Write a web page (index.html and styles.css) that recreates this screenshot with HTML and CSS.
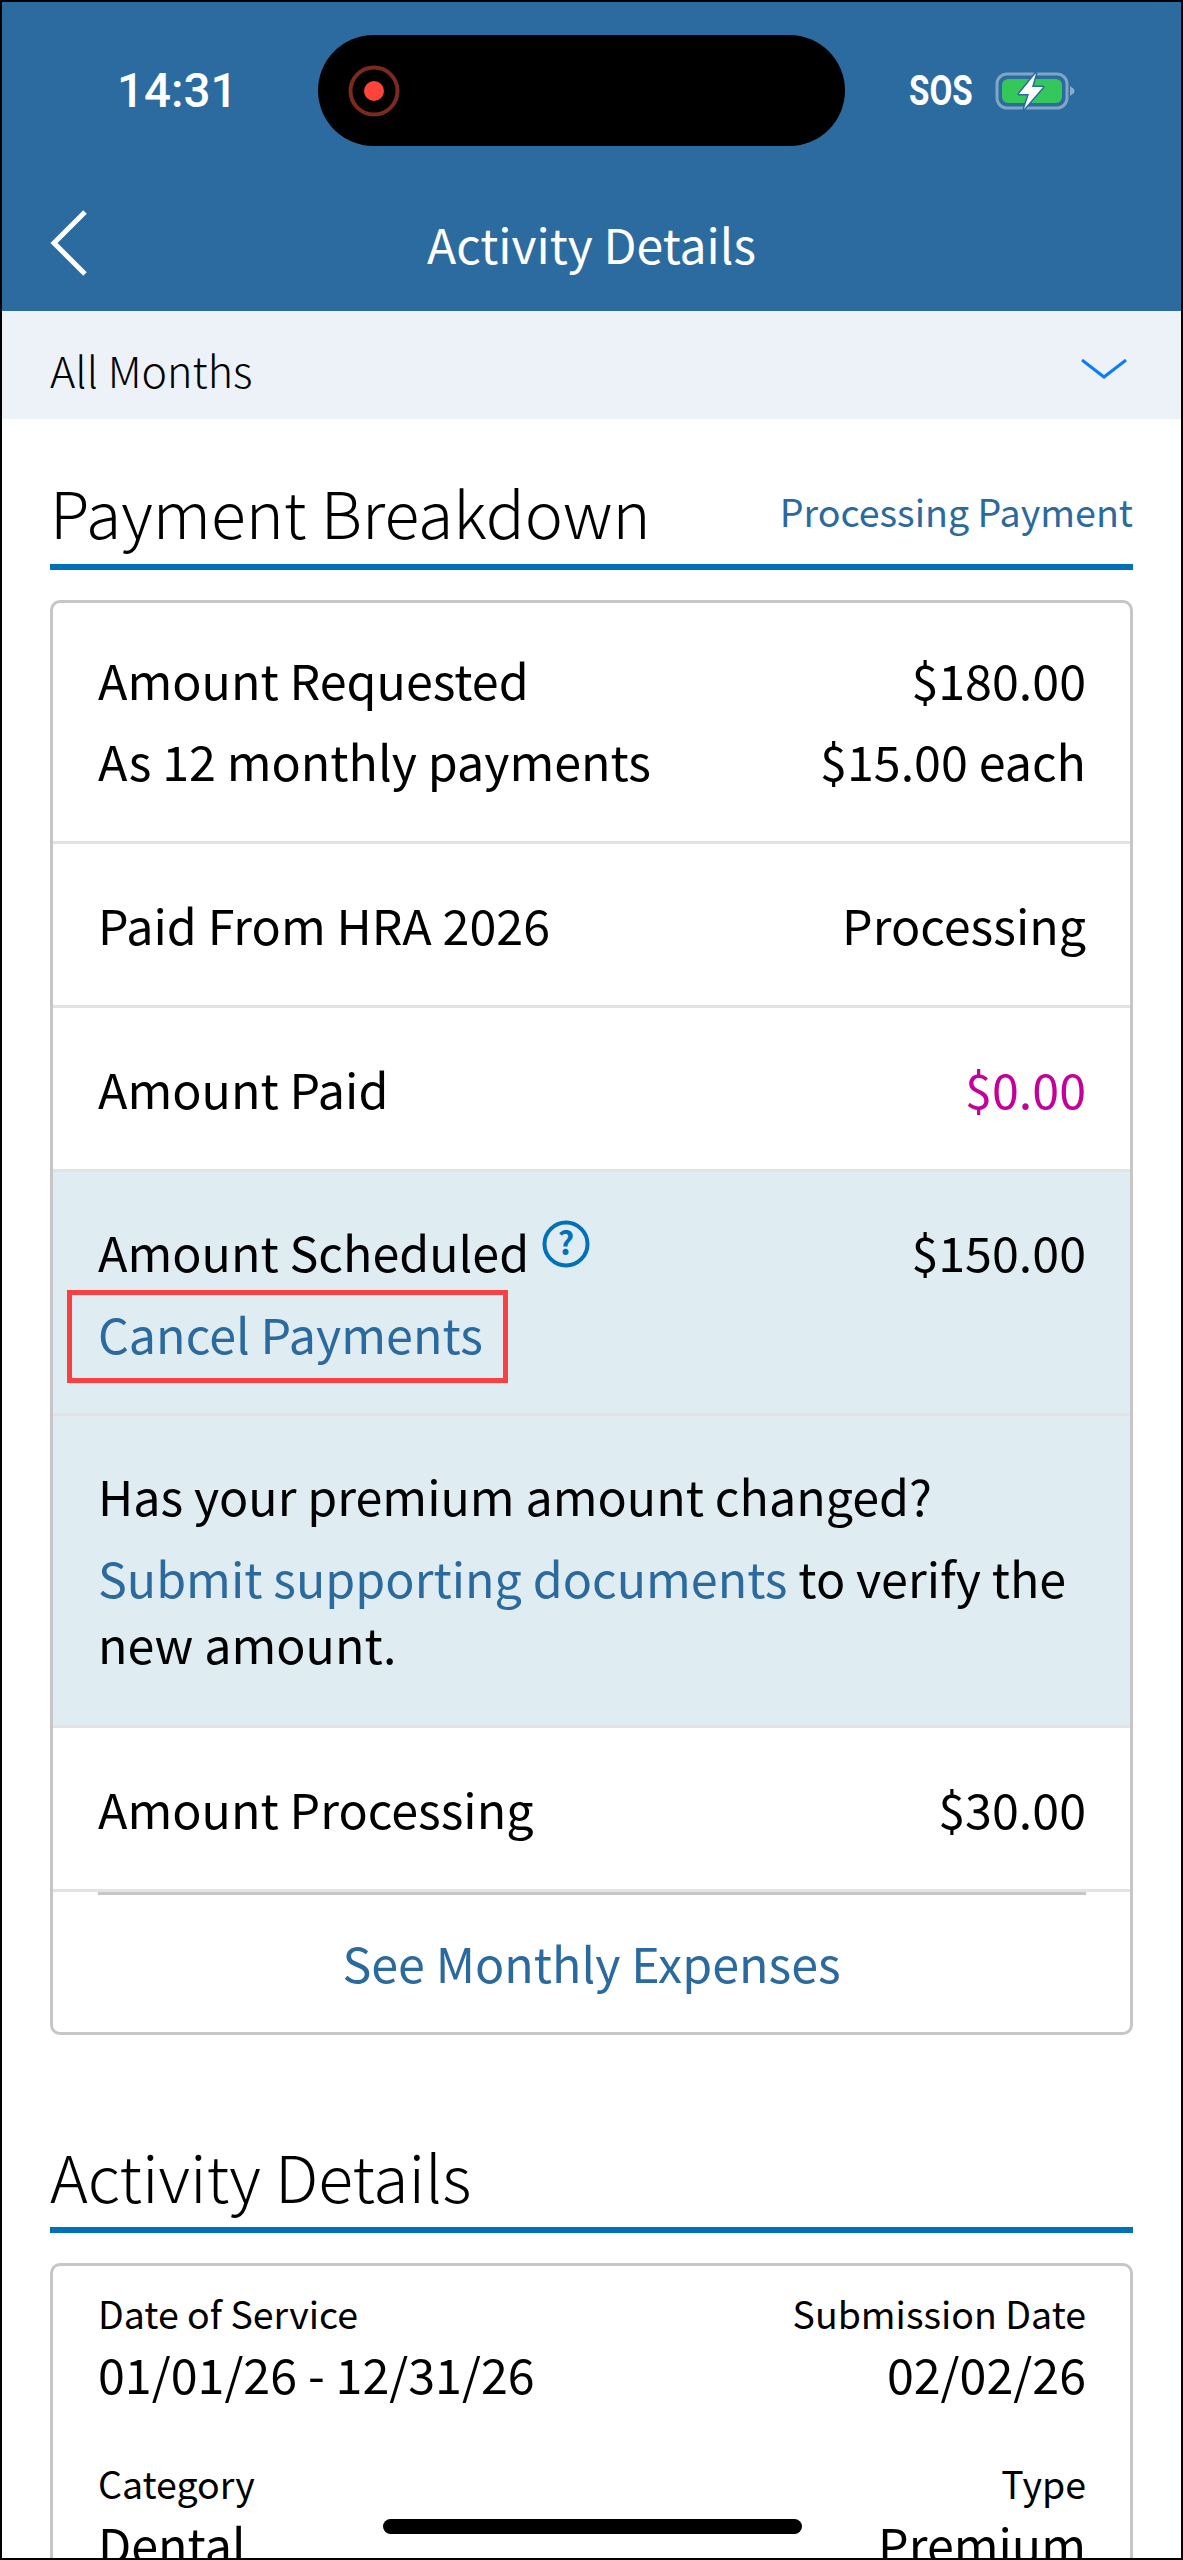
FILE: index.html
```html
<!DOCTYPE html>
<html lang="en">
<head>
  <meta charset="UTF-8">
  <title>Activity Details</title>
  <link rel="stylesheet" href="styles.css">
</head>
<body>
  <div class="phone">

    <!-- Header -->
    <header class="top-bar">
      <div class="status-bar">
        <span class="clock">14:31</span>
        <div class="island">
          <svg class="rec-icon" width="52" height="52" viewBox="0 0 52 52">
            <circle cx="26" cy="26" r="23.5" fill="none" stroke="#7b2a1f" stroke-width="4"/>
            <circle cx="26" cy="26" r="10" fill="#ff453a"/>
          </svg>
        </div>
        <div class="status-right">
          <span class="sos">SOS</span>
          <svg class="battery" width="80" height="40" viewBox="0 0 80 40">
            <rect x="2" y="3" width="70" height="34" rx="10" fill="none" stroke="#fff" stroke-opacity="0.4" stroke-width="3"/>
            <rect x="7" y="8" width="60" height="24" rx="6" fill="#34c759"/>
            <path d="M75 15 L79 18 Q80 20 79 22 L75 25 Z" fill="#fff" fill-opacity="0.45"/>
            <path d="M41 2 L24 23 L34 23 L29 38 L48 16 L37 16 Z" fill="#fff" stroke="#2c6ba0" stroke-width="3" stroke-linejoin="round" paint-order="stroke"/>
          </svg>
        </div>
      </div>
      <div class="nav-bar">
        <svg class="back-icon" width="40" height="68" viewBox="0 0 40 68">
          <path d="M36 3 L5 34 L36 65" fill="none" stroke="#fff" stroke-width="5"/>
        </svg>
        <h1>Activity Details</h1>
      </div>
    </header>

    <!-- Month filter -->
    <div class="month-filter">
      <span>All Months</span>
      <svg width="46" height="20" viewBox="0 0 46 20">
        <path d="M1 1 L23 18 L45 1" fill="none" stroke="#0a7aff" stroke-width="3"/>
      </svg>
    </div>

    <main class="content">
      <!-- Payment Breakdown -->
      <div class="section-head">
        <h2>Payment Breakdown</h2>
        <span class="status-label">Processing Payment</span>
      </div>

      <div class="card">
        <div class="row requested">
          <div class="line"><span>Amount Requested</span><span>$180.00</span></div>
          <div class="line"><span>As 12 monthly payments</span><span>$15.00 each</span></div>
        </div>
        <div class="row">
          <div class="line"><span>Paid From HRA 2026</span><span>Processing</span></div>
        </div>
        <div class="row">
          <div class="line"><span>Amount Paid</span><span class="paid">$0.00</span></div>
        </div>
        <div class="row tinted scheduled">
          <div class="line">
            <span>Amount Scheduled<span class="help"><svg width="48" height="48" viewBox="0 0 48 48"><circle cx="24" cy="24" r="21.5" fill="none" stroke="#0071b8" stroke-width="4"/><text x="24" y="35" text-anchor="middle" class="help-mark">?</text></svg></span></span>
            <span>$150.00</span>
          </div>
          <div class="line"><a class="link cancel">Cancel Payments</a></div>
        </div>
        <div class="row tinted premium">
          <p>Has your premium amount changed?</p>
          <p class="tight"><a class="link">Submit supporting documents</a> to verify the new amount.</p>
        </div>
        <div class="row">
          <div class="line"><span>Amount Processing</span><span>$30.00</span></div>
        </div>
        <div class="see-more"><a class="link">See Monthly Expenses</a></div>
      </div>

      <!-- Activity Details -->
      <div class="section-head second">
        <h2>Activity Details</h2>
      </div>

      <div class="card details">
        <div class="detail-row">
          <div><div class="label">Date of Service</div><div class="value">01/01/26 - 12/31/26</div></div>
          <div class="right"><div class="label">Submission Date</div><div class="value">02/02/26</div></div>
        </div>
        <div class="detail-row">
          <div><div class="label">Category</div><div class="value">Dental</div></div>
          <div class="right"><div class="label">Type</div><div class="value">Premium</div></div>
        </div>
      </div>
    </main>

    <div class="home-bar"></div>
  </div>
</body>
</html>
```

FILE: styles.css
```css
* {
  box-sizing: border-box;
}

body {
  margin: 0;
  font-family: "Noto Sans CJK SC", "Noto Sans", sans-serif;
  color: #000;
  background: #000;
}

.phone {
  position: relative;
  height: 2560px;
  overflow: hidden;
  border: 2px solid #000;
  background: #fff;
}

/* Header */
.top-bar {
  height: 309px;
  padding-top: 33px;
  background-color: #2c6ba0;
  color: #fff;
}

.status-bar {
  display: flex;
  align-items: center;
  height: 111px;
  padding-left: 115px;
}

.clock {
  width: 201px;
  font-family: Roboto, sans-serif;
  font-weight: 500;
  font-size: 47.5px;
}

.island {
  display: flex;
  align-items: center;
  width: 527px;
  height: 111px;
  padding-left: 30px;
  border-radius: 56px;
  background: #000;
}

.status-right {
  display: flex;
  align-items: center;
  gap: 24px;
  margin-left: 64px;
}

.sos {
  display: inline-block;
  width: 62px;
  font-family: Roboto, sans-serif;
  font-weight: 700;
  font-size: 42px;
  line-height: 1;
  transform: scaleX(0.79);
  transform-origin: left center;
}

.nav-bar {
  position: relative;
  display: flex;
  align-items: center;
  justify-content: center;
  height: 165px;
}

.back-icon {
  position: absolute;
  left: 47px;
  top: 63px;
}

h1 {
  margin: 28px 0 0;
  font-size: 48px;
  font-weight: 400;
}

.month-filter {
  display: flex;
  align-items: center;
  justify-content: space-between;
  height: 108px;
  padding: 8px 54px 0 48px;
  background-color: #edf2f9;
  font-size: 43px;
  font-weight: 300;
}

/* Sections */
.content {
  padding: 0 48px;
}

.section-head {
  display: flex;
  align-items: center;
  justify-content: space-between;
  height: 151px;
  padding-top: 38px;
  border-bottom: 6px solid #0071b8;
}

.section-head.second {
  height: 198px;
  padding-top: 87px;
}

h2 {
  margin: 0;
  font-size: 64.4px;
  font-weight: 300;
}

.status-label {
  color: #2b6a9f;
  font-size: 37.6px;
}

.card {
  margin-top: 30px;
  border: 3px solid #c6c6c6;
  border-radius: 10px;
  overflow: hidden;
  font-size: 48.4px;
}

.row {
  padding: 40px 44px 41px 45px;
  border-bottom: 3px solid #e3e3e3;
}

.line {
  display: flex;
  justify-content: space-between;
  line-height: 80px;
}

.requested {
  padding-top: 36px;
  padding-bottom: 40px;
}

.requested .line {
  line-height: 81px;
}

.tinted {
  background-color: #dfecf2;
}

.scheduled {
  padding-top: 39px;
  padding-bottom: 40px;
}

.scheduled .line + .line {
  margin-top: 2px;
}

.premium {
  padding-top: 46px;
  padding-bottom: 49px;
}

.premium p {
  margin: 0;
  line-height: 66px;
}

.premium .tight {
  margin-top: 16px;
}

.paid {
  color: #c4009b;
}

.link {
  color: #2b6a9f;
}

.cancel {
  position: relative;
  display: inline-block;
}

/* red annotation box around the link */
.cancel::after {
  content: "";
  position: absolute;
  top: -3px;
  bottom: -10px;
  left: -31px;
  right: -25px;
  border: 5px solid #f94144;
}

.help {
  position: relative;
  top: -15px;
  margin-left: 13px;
}

.help svg {
  vertical-align: middle;
  overflow: visible;
}

.help-mark {
  font-size: 32px;
  font-weight: 700;
  fill: #0071b8;
}

.see-more {
  position: relative;
  height: 140px;
  line-height: 140px;
  text-align: center;
}

/* darker rule under the last row */
.see-more::before {
  content: "";
  position: absolute;
  top: 0;
  left: 45px;
  right: 44px;
  height: 3px;
  background: #c6c6c6;
}

/* Details card */
.details {
  padding: 16px 44px 30px 45px;
}

.detail-row {
  display: flex;
  justify-content: space-between;
  margin-bottom: 50px;
}

.right {
  text-align: right;
}

.label {
  font-size: 37.5px;
  line-height: 62px;
}

.value {
  font-size: 48.4px;
  line-height: 58px;
}

.home-bar {
  position: absolute;
  left: 381px;
  top: 2517px;
  width: 419px;
  height: 15px;
  border-radius: 8px;
  background: #000;
}
```
